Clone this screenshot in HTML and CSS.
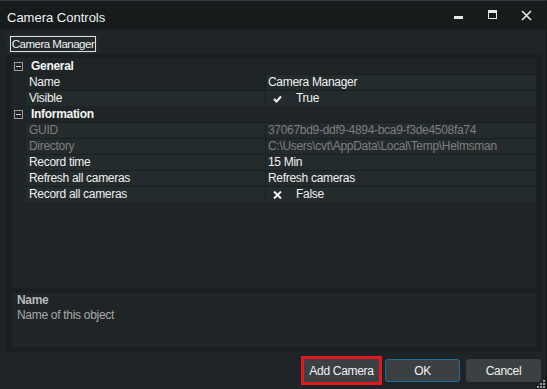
FILE: index.html
```html
<!DOCTYPE html>
<html lang="en">
<head>
  <meta charset="UTF-8" />
  <title>Camera Controls</title>
  <link rel="stylesheet" href="styles.css">
</head>
<body>
  <div class="window">
    <!-- Title bar -->
    <div class="titlebar">
      <span class="title">Camera Controls</span>
      <div class="caption-buttons">
        <svg class="caption-btn" width="34" height="29" viewBox="0 0 34 29">
          <rect x="12" y="16" width="9" height="3" fill="#e8e8e8" />
        </svg>
        <svg class="caption-btn" width="34" height="29" viewBox="0 0 34 29">
          <rect x="12.5" y="10.5" width="8" height="8" fill="none" stroke="#e8e8e8" />
          <rect x="12" y="10" width="9" height="3" fill="#e8e8e8" />
        </svg>
        <svg class="caption-btn" width="34" height="29" viewBox="0 0 34 29">
          <path d="M12 11 L21 20 M21 11 L12 20" stroke="#e8e8e8" stroke-width="1.6" />
        </svg>
      </div>
    </div>

    <div class="client">
      <div class="tabs">
        <div class="tab"><span class="tab-label">Camera Manager</span></div>
      </div>

      <div class="tab-page">
        <div class="grid">
          <div class="category"><span class="toggle"></span>General</div>
          <div class="row">
            <div class="cells">
              <div class="label selected">Name</div>
              <div class="value">Camera Manager</div>
            </div>
          </div>
          <div class="row">
            <div class="cells">
              <div class="label">Visible</div>
              <div class="value">
                <svg class="glyph" width="9" height="8" viewBox="0 0 9 8">
                  <path d="M1 4 L3.5 6.5 L8 1.5" fill="none" stroke="#f0f0f0" stroke-width="2" />
                </svg>True
              </div>
            </div>
          </div>
          <div class="category"><span class="toggle"></span>Information</div>
          <div class="row disabled">
            <div class="cells">
              <div class="label">GUID</div>
              <div class="value">37067bd9-ddf9-4894-bca9-f3de4508fa74</div>
            </div>
          </div>
          <div class="row disabled">
            <div class="cells">
              <div class="label">Directory</div>
              <div class="value">C:\Users\cvt\AppData\Local\Temp\Helmsman</div>
            </div>
          </div>
          <div class="row">
            <div class="cells">
              <div class="label">Record time</div>
              <div class="value">15 Min</div>
            </div>
          </div>
          <div class="row">
            <div class="cells">
              <div class="label">Refresh all cameras</div>
              <div class="value">Refresh cameras</div>
            </div>
          </div>
          <div class="row">
            <div class="cells">
              <div class="label">Record all cameras</div>
              <div class="value">
                <svg class="glyph" width="9" height="8" viewBox="0 0 9 8">
                  <path d="M1 0.5 L8 7.5 M8 0.5 L1 7.5" stroke="#f0f0f0" stroke-width="2" />
                </svg>False
              </div>
            </div>
          </div>
        </div>

        <div class="help">
          <div class="help-title">Name</div>
          <div class="help-text">Name of this object</div>
        </div>
      </div>

      <div class="buttons">
        <button class="btn highlighted">Add Camera</button>
        <button class="btn btn-default">OK</button>
        <button class="btn">Cancel</button>
      </div>
    </div>

    <svg class="grip" width="8" height="8" viewBox="0 0 8 8">
      <rect x="6" y="0" width="2" height="2" fill="#9a9a9a" />
      <rect x="3" y="3" width="2" height="2" fill="#9a9a9a" />
      <rect x="6" y="3" width="2" height="2" fill="#9a9a9a" />
      <rect x="0" y="6" width="2" height="2" fill="#9a9a9a" />
      <rect x="3" y="6" width="2" height="2" fill="#9a9a9a" />
      <rect x="6" y="6" width="2" height="2" fill="#9a9a9a" />
    </svg>
  </div>
</body>
</html>
```

FILE: styles.css
```css
body {
  margin: 0;
  padding: 0;
  background-color: #1e2426;
  font-family: 'Liberation Sans', Arial, sans-serif;
  font-size: 12px;
  color: #f0f0f0;
  overflow: hidden;
}

.window {
  position: relative;
  width: 547px;
  height: 389px;
  box-sizing: border-box;
  border-top: 1px solid #34383a;
  border-right: 1px solid #15191a;
  display: flex;
  flex-direction: column;
  background-color: #1e2426;
}

.titlebar {
  height: 28px;
  background-color: #161b1c;
  display: flex;
  align-items: center;
  justify-content: space-between;
  padding-left: 7px;
}

.title {
  font-size: 13px;
  color: #f2f2f2;
  margin-top: 4px;
}

.caption-buttons {
  display: flex;
  align-self: flex-start;
  margin-top: -1px;
  margin-right: 2px;
}

.caption-btn {
  display: block;
}

.client {
  flex: 1;
  display: flex;
  flex-direction: column;
  padding: 0 5px 0 7px;
}

.tabs {
  height: 25px;
  display: flex;
  align-items: flex-end;
}

.tab {
  width: 92px;
  height: 20px;
  background-color: #232a2c;
  display: flex;
  align-items: center;
  justify-content: center;
}

.tab-label {
  border: 1px solid #e2e2e2;
  padding: 0 1px;
  font-size: 11.5px;
  line-height: 14px;
  white-space: nowrap;
  letter-spacing: -0.5px;
}

.tab-page {
  height: 298px;
  box-sizing: border-box;
  background-color: #191e1f;
  padding: 4px 5px 5px 5px;
  display: flex;
  flex-direction: column;
  gap: 5px;
}

.grid {
  height: 230px;
  background-color: #1f2527;
  letter-spacing: -0.3px;
}

.category {
  height: 16px;
  display: flex;
  align-items: center;
  font-weight: bold;
  color: #f5f5f5;
}

.toggle {
  position: relative;
  width: 7px;
  height: 7px;
  border: 1px solid #9c9c9c;
  margin: 0 8px 0 2px;
}

.toggle::after {
  content: '';
  position: absolute;
  left: 1px;
  top: 3px;
  width: 5px;
  height: 1px;
  background-color: #d0d0d0;
}

.row {
  height: 16px;
  padding-left: 14px;
}

.cells {
  height: 16px;
  box-sizing: border-box;
  padding-top: 1px;
  display: flex;
  gap: 1px;
  background-color: #1a1f21;
}

.label,
.value {
  height: 15px;
  line-height: 15px;
  background-color: #242b2d;
  white-space: nowrap;
  overflow: hidden;
}

.label {
  width: 239px;
  padding-left: 3px;
  box-sizing: border-box;
}

.label.selected {
  background-color: #1f2527;
}

.value {
  flex: 1;
  padding-left: 2px;
  display: flex;
  align-items: center;
}

.glyph {
  margin: 0 14px 0 5px;
}

.disabled .label,
.disabled .value {
  color: #7e7e7e;
}

.help {
  flex: 1;
  background-color: #1f2527;
  padding: 0 5px;
  letter-spacing: -0.3px;
}

.help-title {
  font-weight: bold;
  color: #b8b8b8;
  line-height: 14px;
}

.help-text {
  color: #a9a9a9;
  line-height: 17px;
}

.buttons {
  display: flex;
  justify-content: flex-end;
  gap: 6px;
  padding-top: 7px;
}

.btn {
  width: 75px;
  height: 23px;
  background-color: #3b4043;
  border: 1px solid #3b4043;
  border-radius: 3px;
  color: #f2f2f2;
  font-family: 'Liberation Sans', Arial, sans-serif;
  font-size: 12px;
  letter-spacing: -0.3px;
  padding: 0;
}

.btn-default {
  border-color: #1f6f98;
}

.highlighted {
  border-radius: 0;
  outline: 3px solid #e3171f;
  outline-offset: 0;
}

.grip {
  position: absolute;
  right: 1px;
  bottom: 1px;
}
```
